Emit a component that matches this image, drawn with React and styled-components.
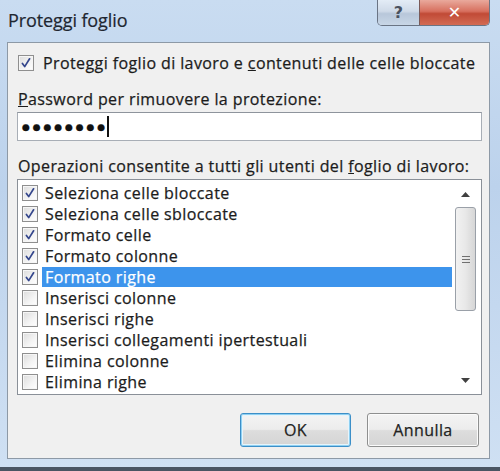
import React from 'react';
import styled, { createGlobalStyle } from 'styled-components';

const GlobalStyle = createGlobalStyle`
  html, body {
    margin: 0;
    padding: 0;
    background: #bfd4ec;
  }
  * { box-sizing: border-box; }
`;

const Frame = styled.div`
  width: 500px;
  height: 471px;
  display: flex;
  flex-direction: column;
  background: linear-gradient(180deg, #c9dcf1 0%, #bcd2ec 40%, #cfe0f3 100%);
  border-bottom: 4px solid #4a5563;
  font-family: "Open Sans", "Noto Sans", sans-serif;
  color: #1c1c1c;
  overflow: hidden;
`;

const TitleBar = styled.div`
  height: 42px;
  display: flex;
  align-items: flex-start;
  padding-left: 8px;
  flex-shrink: 0;
`;

const Title = styled.div`
  font-size: 18px;
  line-height: 40px;
  color: #1e2630;
  letter-spacing: -0.1px;
  -webkit-text-stroke: 0.2px #1e2630;
`;

const Caption = styled.div`
  margin-left: auto;
  margin-right: 10px;
  display: flex;
  height: 26px;
  border: 1px solid #6a7484;
  border-top: none;
  border-radius: 0 0 5px 5px;
  overflow: hidden;
`;

const CapButton = styled.div`
  width: ${({ wide }) => (wide ? '70px' : '41px')};
  display: flex;
  align-items: center;
  justify-content: center;
  background: ${({ close }) =>
    close
      ? 'linear-gradient(180deg, #e9a99c 0%, #d7705f 45%, #c14a36 55%, #d26b54 100%)'
      : 'linear-gradient(180deg, #e3ecf6 0%, #cfdae8 45%, #b8c7da 55%, #c8d6e6 100%)'};
  border-left: ${({ close }) => (close ? '1px solid #7a5a58' : 'none')};
  color: ${({ close }) => (close ? '#fff' : '#4a5260')};
  font-family: "DejaVu Sans", sans-serif;
  font-weight: bold;
  font-size: 16px;
`;

const Client = styled.div`
  margin: 0 10px 0 7px;
  height: 417px;
  background: #f0f0f0;
  border: 1px solid #8d99a6;
  display: flex;
  flex-direction: column;
  padding: 10px 8px 0 9px;
  font-size: 16px;
  letter-spacing: 0.4px;
  -webkit-text-stroke: 0.25px currentColor;
`;

const Row = styled.label`
  display: flex;
  align-items: center;
  gap: 9px;
  height: 20px;
  margin-left: 1px;
  white-space: nowrap;
`;

const Box = styled.span`
  width: 16px;
  height: 16px;
  flex-shrink: 0;
  border: 1px solid #8f8f8f;
  background: linear-gradient(135deg, #dcdcdc 0%, #f4f4f4 60%, #ffffff 100%);
  box-shadow: inset 0 0 0 1px #f6f6f6;
  display: flex;
  align-items: center;
  justify-content: center;
`;

const Check = () => (
  <svg width="12" height="12" viewBox="0 0 12 12">
    <path d="M2.4 6.4 L4.7 9.6 L9.6 1.8" fill="none" stroke="#34468c" strokeWidth="1.7" strokeLinecap="round" strokeLinejoin="round" />
  </svg>
);

const CheckBox = ({ checked }) => <Box>{checked && <Check />}</Box>;

const Label = styled.div`
  margin-top: ${({ top }) => top}px;
  margin-left: 1px;
  line-height: 20px;
  white-space: nowrap;
`;

const Input = styled.div`
  margin-top: 3px;
  height: 29px;
  width: 465px;
  background: #fff;
  border: 1px solid #a8aeb6;
  border-top-color: #8e949c;
  display: flex;
  align-items: center;
  padding-left: 4px;
`;

const Dots = styled.span`
  font-family: "DejaVu Sans", sans-serif;
  font-size: 9px;
  letter-spacing: 2.9px;
  color: #111;
`;

const Caret = styled.span`
  width: 2px;
  height: 21px;
  background: #111;
  margin-left: -1px;
`;

const List = styled.div`
  margin-top: 3px;
  height: 216px;
  width: 465px;
  background: #fff;
  border: 1px solid #8a9098;
  display: flex;
`;

const Items = styled.div`
  flex: 1;
  padding: 2px 0 0 4px;
`;

const Item = styled.div`
  height: 21px;
  display: flex;
  align-items: center;
  gap: 4px;
  white-space: nowrap;
`;

const ItemText = styled.span`
  flex: 1;
  height: 20px;
  line-height: 20px;
  padding-left: 3px;
  background: ${({ selected }) => (selected ? '#3d94ec' : 'transparent')};
  color: ${({ selected }) => (selected ? '#fff' : '#1c1c1c')};
`;

const ScrollBar = styled.div`
  width: 23px;
  margin: 1px 4px 1px 2px;
  display: flex;
  flex-direction: column;
  align-items: center;
`;

const Arrow = styled.div`
  height: 26px;
  width: 100%;
  display: flex;
  align-items: center;
  justify-content: center;
`;

const Track = styled.div`
  flex: 1;
  width: 100%;
  display: flex;
  flex-direction: column;
`;

const Thumb = styled.div`
  height: 104px;
  width: 21px;
  margin-left: 1px;
  border: 1px solid #9aa0a8;
  border-radius: 3px;
  background: linear-gradient(90deg, #f2f2f2 0%, #e8e8e8 50%, #d6d6d6 100%);
  display: flex;
  align-items: center;
  justify-content: center;
`;

const Footer = styled.div`
  margin-top: auto;
  margin-bottom: 11px;
  display: flex;
  justify-content: flex-end;
  gap: 16px;
  padding-right: 2px;
`;

const Button = styled.div`
  width: ${({ w }) => w}px;
  height: 34px;
  border-radius: 3px;
  border: 1px solid ${({ primary }) => (primary ? '#3c8fc8' : '#8e8f8f')};
  box-shadow: ${({ primary }) =>
    primary ? 'inset 0 0 0 1px #8fd0f2, inset 0 0 0 2px #e6f4fb' : 'inset 0 0 0 1px #fbfbfb'};
  background: linear-gradient(180deg, #f4f4f4 0%, #ececec 48%, #dddddd 52%, #d4d4d4 100%);
  display: flex;
  align-items: center;
  justify-content: center;
  color: #222;
`;

const items = [
  ['Seleziona celle bloccate', true],
  ['Seleziona celle sbloccate', true],
  ['Formato celle', true],
  ['Formato colonne', true],
  ['Formato righe', true, true],
  ['Inserisci colonne', false],
  ['Inserisci righe', false],
  ['Inserisci collegamenti ipertestuali', false],
  ['Elimina colonne', false],
  ['Elimina righe', false],
];

export default function App() {
  return (
    <>
      <GlobalStyle />
      <Frame>
        <TitleBar>
          <Title>Proteggi foglio</Title>
          <Caption>
            <CapButton>?</CapButton>
            <CapButton wide close>✕</CapButton>
          </Caption>
        </TitleBar>
        <Client>
          <Row>
            <CheckBox checked />
            <span>Proteggi foglio di lavoro e <u>c</u>ontenuti delle celle bloccate</span>
          </Row>
          <Label top={16}><u>P</u>assword per rimuovere la protezione:</Label>
          <Input>
            <Dots>●●●●●●●●</Dots>
            <Caret />
          </Input>
          <Label top={15}>Operazioni consentite a tutti gli utenti del <u>f</u>oglio di lavoro:</Label>
          <List>
            <Items>
              {items.map(([text, checked, selected]) => (
                <Item key={text}>
                  <CheckBox checked={checked} />
                  <ItemText selected={selected}>{text}</ItemText>
                </Item>
              ))}
            </Items>
            <ScrollBar>
              <Arrow>
                <svg width="9" height="5" viewBox="0 0 9 5"><path d="M0 5 L4.5 0 L9 5 Z" fill="#404040" /></svg>
              </Arrow>
              <Track>
                <Thumb>
                  <svg width="8" height="7" viewBox="0 0 8 7">
                    <path d="M0 0.5 H8 M0 3.5 H8 M0 6.5 H8" stroke="#707070" strokeWidth="1" />
                  </svg>
                </Thumb>
              </Track>
              <Arrow>
                <svg width="9" height="5" viewBox="0 0 9 5"><path d="M0 0 L4.5 5 L9 0 Z" fill="#404040" /></svg>
              </Arrow>
            </ScrollBar>
          </List>
          <Footer>
            <Button primary w={111}>OK</Button>
            <Button w={112}>Annulla</Button>
          </Footer>
        </Client>
      </Frame>
    </>
  );
}
